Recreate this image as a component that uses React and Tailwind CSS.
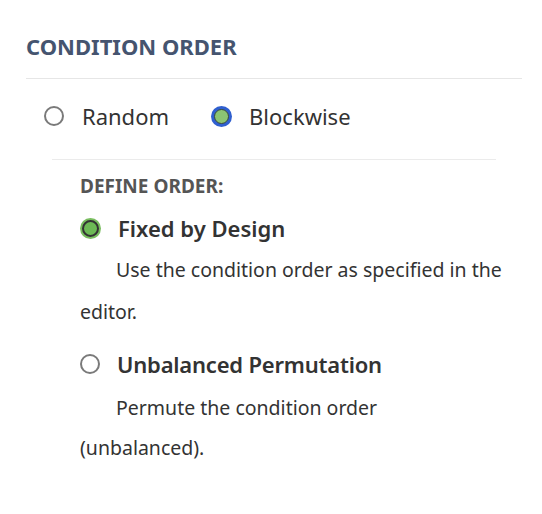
import React from 'react'

function Radio({ state }) {
  if (state === 'focus') {
    return (
      <span className="flex h-[21px] w-[21px] shrink-0 items-center justify-center rounded-full bg-[#2f5fcf]">
        <span className="h-[15px] w-[15px] rounded-full border border-[#3b4a3b] bg-[#8cc473]" />
      </span>
    )
  }
  if (state === 'checked') {
    return (
      <span className="flex h-[21px] w-[21px] shrink-0 items-center justify-center rounded-full bg-[#79bd5f]">
        <span className="h-[17px] w-[17px] rounded-full border-[2.5px] border-[#333] bg-[#6cb955]" />
      </span>
    )
  }
  return <span className="h-[20px] w-[20px] shrink-0 rounded-full border-2 border-[#7a7a7a] bg-white" />
}

export default function App() {
  return (
    <div className="min-h-[514px] bg-white pl-[26px] pr-[20px] pt-[30px] text-[#333]" style={{ fontFamily: '"Noto Sans", sans-serif' }}>
      <h2 className="text-[22px] font-bold uppercase leading-[32px] text-[#45546f]">Condition Order</h2>
      <div className="mt-[16px] border-t border-[#e6e6e6]" />

      <div className="flex items-center pl-[18px] pt-[22px] pb-[28px] text-[22px] leading-[30px]">
        <label className="flex items-center gap-[18px]">
          <Radio />
          <span>Random</span>
        </label>
        <label className="ml-[42px] flex items-center gap-[17px]">
          <Radio state="focus" />
          <span>Blockwise</span>
        </label>
      </div>

      <div className="ml-[26px] mr-[26px] border-t border-[#ebebeb]" />

      <div className="pl-[54px] pt-[14px]">
        <p className="text-[19px] font-bold uppercase leading-[24px] text-[#555]">Define Order:</p>

        <label className="mt-[15px] flex items-center gap-[17px] text-[22px] font-semibold leading-[30px]">
          <Radio state="checked" />
          <span>Fixed by Design</span>
        </label>
        <p className="mt-[6px] w-[440px] indent-[36px] text-[19.5px] leading-[42px]">
          Use the condition order as specified in the editor.
        </p>

        <label className="mt-[16px] flex items-center gap-[17px] text-[22px] font-semibold leading-[30px] tracking-[-0.2px]">
          <Radio />
          <span>Unbalanced Permutation</span>
        </label>
        <p className="mt-[9px] w-[330px] indent-[36px] text-[19.5px] leading-[40px]">
          Permute the condition order (unbalanced).
        </p>
      </div>
    </div>
  )
}
